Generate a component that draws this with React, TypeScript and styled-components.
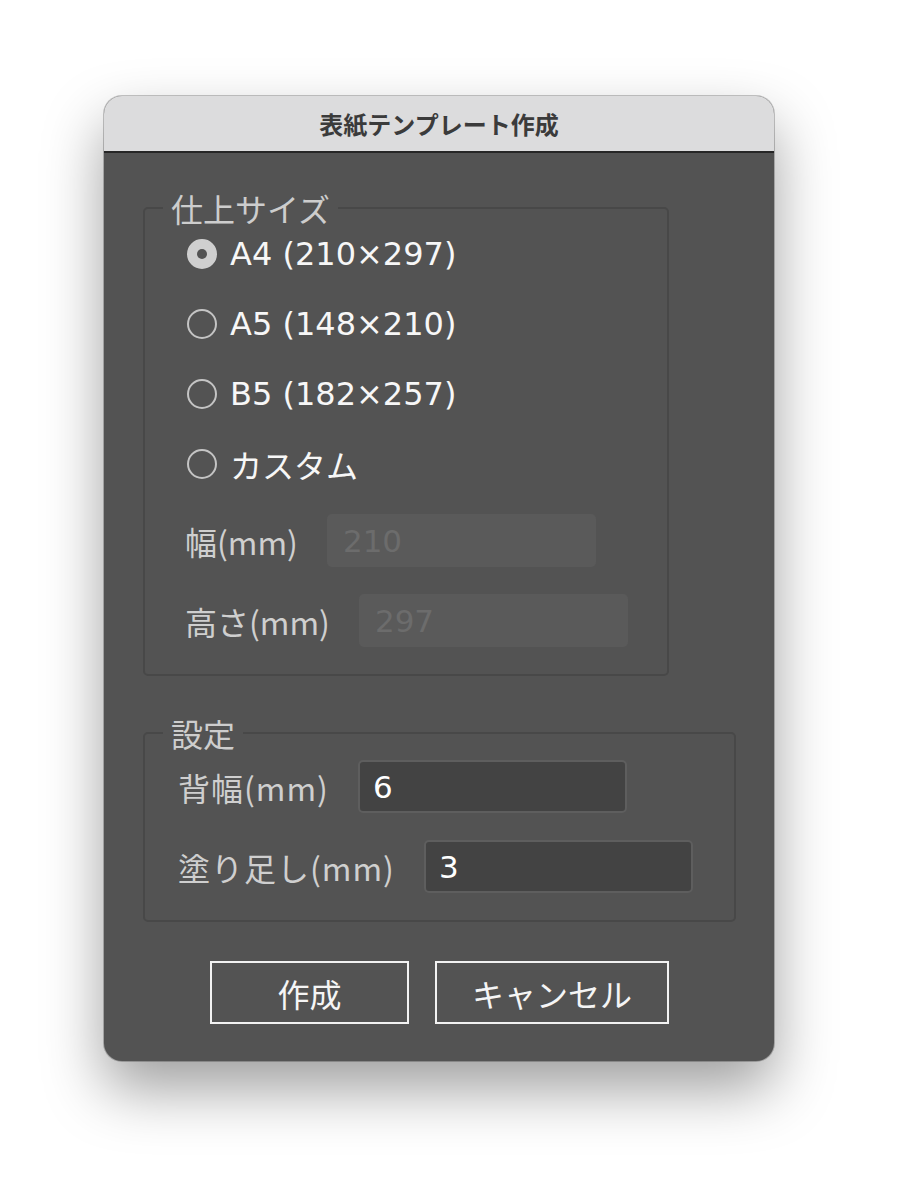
import React, { useState } from 'react';
import styled, { createGlobalStyle } from 'styled-components';

const GlobalStyle = createGlobalStyle`
  html, body {
    margin: 0;
    padding: 0;
    background: #ffffff;
  }
  body {
    font-family: "Noto Sans CJK JP", "Noto Sans", sans-serif;
  }
`;

const Page = styled.div`
  width: 902px;
  height: 1202px;
  padding: 96px 0 0 104px;
  box-sizing: border-box;
`;

const Window = styled.div`
  width: 670px;
  height: 965px;
  border-radius: 18px;
  overflow: hidden;
  background: #535353;
  box-shadow: 0 0 0 1px rgba(0, 0, 0, 0.22), 0 28px 60px rgba(0, 0, 0, 0.38);
  display: flex;
  flex-direction: column;
`;

const TitleBar = styled.div`
  height: 55px;
  flex: none;
  display: flex;
  align-items: center;
  justify-content: center;
  background: #dcdcdd;
  border-bottom: 2px solid #262626;
  font-size: 24px;
  font-weight: 700;
  color: #3b3b3b;
`;

const Body = styled.div`
  padding: 37px 38px 0 39px;
  display: flex;
  flex-direction: column;
`;

const Group = styled.fieldset<{ $width: number }>`
  width: ${p => p.$width}px;
  box-sizing: border-box;
  margin: 0;
  padding: 0;
  border: 2px solid #484848;
  border-radius: 5px;
  & + & {
    margin-top: 39px;
  }
`;

const Legend = styled.legend`
  margin-left: 18px;
  padding: 0 8px;
  font-size: 32px;
  line-height: 36px;
  color: #cdcdcd;
`;

const GroupContent = styled.div<{ $padLeft: number; $padTop: number }>`
  padding: ${p => p.$padTop}px 0 27px ${p => p.$padLeft}px;
  display: flex;
  flex-direction: column;
`;

const RadioList = styled.div`
  display: flex;
  flex-direction: column;
  gap: 14px;
`;

const RadioRow = styled.label`
  height: 56px;
  display: flex;
  align-items: center;
  gap: 13px;
  cursor: pointer;
  font-family: "DejaVu Sans", "Noto Sans CJK JP", sans-serif;
  font-size: 32px;
  color: #f7f7f7;
`;

const RadioCircle = styled.span<{ $checked: boolean }>`
  width: 30px;
  height: 30px;
  margin-left: 2px;
  box-sizing: border-box;
  border-radius: 50%;
  flex: none;
  display: flex;
  align-items: center;
  justify-content: center;
  border: 2px solid ${p => (p.$checked ? '#cfcfcf' : '#c4c4c4')};
  background: ${p => (p.$checked ? '#cfcfcf' : 'transparent')};

  &::after {
    content: '';
    width: 10px;
    height: 10px;
    border-radius: 50%;
    background: #535353;
    display: ${p => (p.$checked ? 'block' : 'none')};
  }
`;

const FieldRows = styled.div<{ $marginTop: number }>`
  margin-top: ${p => p.$marginTop}px;
  display: flex;
  flex-direction: column;
  gap: 27px;
`;

const FieldRow = styled.div`
  display: flex;
  align-items: center;
  gap: 29px;
`;

const FieldLabel = styled.span<{ $spacing?: number }>`
  font-size: 32px;
  letter-spacing: ${p => p.$spacing ?? 0}px;
  color: #cfcfcf;
  white-space: nowrap;
`;

const TextInput = styled.input`
  width: 269px;
  height: 53px;
  box-sizing: border-box;
  border-radius: 5px;
  font-family: "DejaVu Sans", "Noto Sans CJK JP", sans-serif;
  font-size: 31px;
  outline: none;
  margin: 0;

  &:enabled {
    background: #434343;
    border: 2px solid #5e5e5e;
    color: #ffffff;
    padding: 0 13px;
  }

  &:disabled {
    background: #5a5a5a;
    border: none;
    color: #6c6c6c;
    padding: 0 16px;
  }
`;

const ButtonBar = styled.div`
  margin-top: 39px;
  display: flex;
  justify-content: center;
  gap: 26px;
`;

const Button = styled.button`
  min-width: 199px;
  height: 63px;
  box-sizing: border-box;
  padding: 0 35px;
  background: transparent;
  border: 2px solid #f2f2f2;
  color: #f5f5f5;
  font-family: inherit;
  font-size: 32px;
  cursor: pointer;
`;

const sizes = [
  { id: 'a4', label: 'A4 (210×297)' },
  { id: 'a5', label: 'A5 (148×210)' },
  { id: 'b5', label: 'B5 (182×257)' },
  { id: 'custom', label: 'カスタム' },
];

export default function App() {
  const [size, setSize] = useState('a4');
  const [spine, setSpine] = useState('6');
  const [bleed, setBleed] = useState('3');
  const custom = size === 'custom';

  return (
    <>
      <GlobalStyle />
      <Page>
        <Window>
          <TitleBar>表紙テンプレート作成</TitleBar>
          <Body>
            <Group $width={526}>
              <Legend>仕上サイズ</Legend>
              <GroupContent $padLeft={40} $padTop={0}>
                <RadioList>
                  {sizes.map(s => (
                    <RadioRow key={s.id} onClick={() => setSize(s.id)}>
                      <RadioCircle $checked={size === s.id} />
                      {s.label}
                    </RadioRow>
                  ))}
                </RadioList>
                <FieldRows $marginTop={22}>
                  <FieldRow>
                    <FieldLabel>幅(mm)</FieldLabel>
                    <TextInput disabled={!custom} defaultValue="210" />
                  </FieldRow>
                  <FieldRow>
                    <FieldLabel>高さ(mm)</FieldLabel>
                    <TextInput disabled={!custom} defaultValue="297" />
                  </FieldRow>
                </FieldRows>
              </GroupContent>
            </Group>
            <Group $width={593}>
              <Legend>設定</Legend>
              <GroupContent $padLeft={33} $padTop={9}>
                <FieldRows $marginTop={0}>
                  <FieldRow>
                    <FieldLabel $spacing={1}>背幅(mm)</FieldLabel>
                    <TextInput value={spine} onChange={e => setSpine(e.target.value)} />
                  </FieldRow>
                  <FieldRow>
                    <FieldLabel $spacing={1}>塗り足し(mm)</FieldLabel>
                    <TextInput value={bleed} onChange={e => setBleed(e.target.value)} />
                  </FieldRow>
                </FieldRows>
              </GroupContent>
            </Group>
            <ButtonBar>
              <Button>作成</Button>
              <Button>キャンセル</Button>
            </ButtonBar>
          </Body>
        </Window>
      </Page>
    </>
  );
}
